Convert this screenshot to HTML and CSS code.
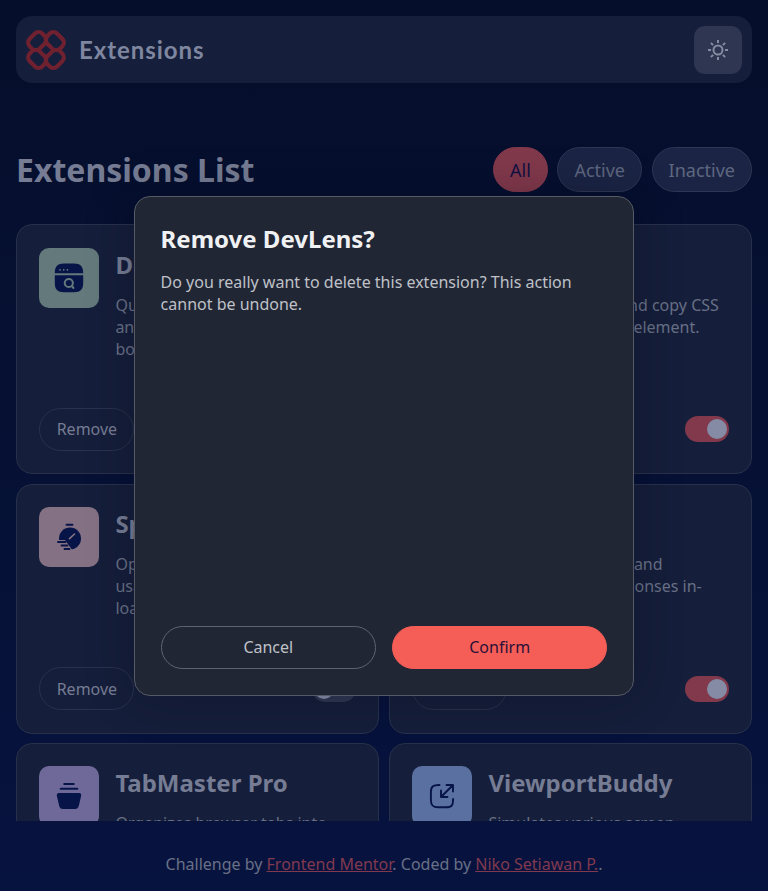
FILE: index.html
```html
<!DOCTYPE html>
<html lang="en">
<head>
<meta charset="utf-8">
<title>Extensions</title>
<link rel="stylesheet" href="styles.css">
</head>
<body>
<div class="page">
  <header class="topbar">
    <div class="brand">
      <svg class="brand-mark" viewBox="0 0 40 40" fill="none" stroke="currentColor" stroke-width="4.2">
        <rect x="2.200" y="4.200" width="18" height="14" rx="5.500" transform="rotate(-45 11.200 11.200)"/>
        <rect x="19.800" y="4.200" width="18" height="14" rx="5.500" transform="rotate(45 28.800 11.200)"/>
        <rect x="2.200" y="21.800" width="18" height="14" rx="5.500" transform="rotate(45 11.200 28.800)"/>
        <rect x="19.800" y="21.800" width="18" height="14" rx="5.500" transform="rotate(-45 28.800 28.800)"/>
      </svg>
      <span class="brand-name">Extensions</span>
    </div>
    <button class="theme" aria-label="Toggle theme">
      <svg width="22" height="22" viewBox="0 0 22 22" fill="none" stroke="currentColor" stroke-width="2">
        <circle cx="11" cy="11" r="4.500"/>
        <path d="M11 1v3M11 18v3M1 11h3M18 11h3M3.900 3.900l2.200 2.200M15.900 15.900l2.200 2.200M3.900 18.100l2.200-2.200M15.900 6.100l2.200-2.200"/>
      </svg>
    </button>
  </header>

  <div class="heading">
    <h1>Extensions List</h1>
    <nav class="filters">
      <button class="filter filter-on">All</button>
      <button class="filter">Active</button>
      <button class="filter">Inactive</button>
    </nav>
  </div>

  <main class="list">
    <article class="card">
      <div class="info">
        <div class="tile green">
          <svg width="60" height="60" viewBox="0 0 60 60">
            <path fill="currentColor" d="M15.800 25.200C15.800 18.500 18.500 15.500 25 15.500H35C41.500 15.500 44.200 18.500 44.200 25.200ZM15.800 27.200H44.200V35C44.200 41.500 41.500 44.200 35 44.200H25C18.500 44.200 15.800 41.500 15.800 35Z"/>
            <g fill="#63797b"><circle cx="21" cy="21.800" r=".9"/><circle cx="24.700" cy="21.800" r=".9"/><circle cx="28.400" cy="21.800" r=".9"/></g>
            <g fill="none" stroke="#63797b" stroke-width="2" stroke-linecap="round"><circle cx="29.800" cy="35" r="4.100"/><path d="M32.800 38l1.700 2"/></g>
          </svg>
        </div>
        <div class="copy"><h2>DevLens</h2><p>Quickly inspect page layouts and visualize element boundaries.</p></div>
      </div>
      <div class="actions"><button class="remove">Remove</button><span class="switch on"></span></div>
    </article>

    <article class="card">
      <div class="info">
        <div class="tile blue"></div>
        <div class="copy"><h2>StyleSpy</h2><p>Instantly analyze and copy CSS from any webpage element.</p></div>
      </div>
      <div class="actions"><button class="remove">Remove</button><span class="switch on"></span></div>
    </article>

    <article class="card">
      <div class="info">
        <div class="tile pink">
          <svg width="60" height="60" viewBox="0 0 60 60" fill="none" stroke-linecap="round">
            <circle cx="31" cy="31.500" r="11" fill="currentColor"/>
            <path d="M16 33H26L34 44H18Z" fill="#857184"/>
            <path d="M30.500 31.700l5-4.700" stroke="#857184" stroke-width="1.600"/>
            <path d="M27.500 17.800h6M19 35h7.500M22.500 38.500h6M25.500 42h5" stroke="currentColor" stroke-width="1.900"/>
          </svg>
        </div>
        <div class="copy"><h2>SpeedBoost</h2><p>Optimizes browser resource usage to accelerate page loading.</p></div>
      </div>
      <div class="actions"><button class="remove">Remove</button><span class="switch"></span></div>
    </article>

    <article class="card">
      <div class="info">
        <div class="tile pink"></div>
        <div class="copy"><h2>JSONWizard</h2><p>Formats, validates, and prettifies JSON responses in-browser.</p></div>
      </div>
      <div class="actions"><button class="remove">Remove</button><span class="switch on"></span></div>
    </article>

    <article class="card">
      <div class="info">
        <div class="tile purple">
          <svg width="60" height="60" viewBox="0 0 60 60" fill="none" stroke-linecap="round">
            <path d="M25.200 18h9.600M21.700 22.800h16.700" stroke="currentColor" stroke-width="1.900"/>
            <path fill="currentColor" d="M20 27H40C41.700 27 42.500 28.200 42.100 30L39.900 39.500C39.300 42 38.200 42.900 36 42.900H24C21.800 42.900 20.700 42 20.100 39.500L17.900 30C17.500 28.200 18.300 27 20 27Z"/>
          </svg>
        </div>
        <div class="copy"><h2>TabMaster Pro</h2><p>Organizes browser tabs into groups and sessions.</p></div>
      </div>
      <div class="actions"><button class="remove">Remove</button><span class="switch on"></span></div>
    </article>

    <article class="card">
      <div class="info">
        <div class="tile blue">
          <svg width="60" height="60" viewBox="0 0 60 60" fill="none" stroke="currentColor" stroke-width="1.900" stroke-linecap="round" stroke-linejoin="round">
            <path d="M27.500 19C21.500 18.800 18.900 20.500 18.900 26V34C18.900 39.500 20.800 41.300 26 41.300H34C39.600 41.300 41.200 39.300 41.100 33"/>
            <path d="M40.500 19.500L29.500 30.500M34.500 19H41V25.500M29 24.500V31H35.500"/>
          </svg>
        </div>
        <div class="copy"><h2>ViewportBuddy</h2><p>Simulates various screen resolutions directly within the browser.</p></div>
      </div>
      <div class="actions"><button class="remove">Remove</button><span class="switch"></span></div>
    </article>
  </main>

  <footer>Challenge by <a>Frontend Mentor</a>. Coded by <a>Niko Setiawan P.</a>.</footer>
</div>

<div class="modal" role="dialog">
  <h3>Remove DevLens?</h3>
  <p>Do you really want to delete this extension? This action cannot be undone.</p>
  <div class="choices">
    <button class="choice">Cancel</button>
    <button class="choice confirm">Confirm</button>
  </div>
</div>
</body>
</html>
```
FILE: styles.css
```css
* { box-sizing: border-box; }

body {
  margin: 0;
  height: 891px;
  overflow: hidden;
  font: 16px/22px "Noto Sans", sans-serif;
  color: #687086;
  background: linear-gradient(180deg, #050e2a, #07133f);
}

h1, h2, h3, p { margin: 0; }

button {
  font: inherit;
  color: inherit;
  background: none;
  border: 0;
  padding: 0;
}

.page {
  display: flex;
  flex-direction: column;
  height: 891px;
  padding: 16px 16px 0;
}

.topbar {
  display: flex;
  flex: none;
  align-items: center;
  justify-content: space-between;
  height: 67px;
  padding: 0 10px;
  border-radius: 16px;
  background: #151e3b;
}

.brand { display: flex; align-items: center; gap: 13px; }
.brand-mark { width: 40px; height: 40px; color: #6f2130; }
.brand-name {
  font: 700 24px/34px Lato, sans-serif;
  letter-spacing: 0.95px;
  color: #7f869f;
}

.theme {
  display: grid;
  place-items: center;
  width: 48px;
  height: 48px;
  border-radius: 11px;
  color: #858ba1;
  background: #2e3651;
}

.heading {
  display: flex;
  flex: none;
  align-items: center;
  justify-content: space-between;
  height: 45px;
  margin: 64px 0 32.3px;
}

h1 { font-size: 32px; line-height: 45px; font-weight: 700; color: #757c93; }

.filters { display: flex; gap: 9.6px; }
.filter {
  height: 45px;
  padding: 0 16px;
  font-size: 18px;
  border: 1px solid #2d3652;
  border-radius: 23px;
  background: #1b2444;
  color: #5e6780;
}
.filter-on { border-color: #81394b; background: #81394b; color: #151044; }

.list {
  display: grid;
  flex: none;
  grid-template-columns: 1fr 1fr;
  grid-auto-rows: 250px;
  gap: 9.4px 10px;
  height: 596.7px;
  overflow: hidden;
}

.card {
  display: flex;
  flex-direction: column;
  justify-content: space-between;
  padding: 22.4px;
  border: 1px solid #283149;
  border-radius: 16px;
  background: #151e3a;
}

.info { display: flex; gap: 16px; }
.tile { flex: none; width: 60px; height: 60px; border-radius: 10px; color: #071448; }
.tile svg { display: block; }
.green { background: #63797b; }
.blue { background: #5a70a0; }
.pink { background: #857184; }
.purple { background: #6f699a; }

h2 { font-size: 24px; line-height: 34px; font-weight: 700; color: #757c93; }
.copy p { margin-top: 12px; }

.actions { display: flex; align-items: center; justify-content: space-between; }
.remove {
  width: 95px;
  height: 43px;
  border: 1px solid #29324b;
  border-radius: 22px;
  color: #757c93;
}

.switch {
  display: flex;
  width: 44px;
  height: 26px;
  padding: 3px 2px;
  border-radius: 13px;
  background: #2e3651;
}
.switch::before { content: ""; width: 20px; height: 20px; border-radius: 50%; background: #858ba5; }
.on { justify-content: flex-end; background: #81394b; }

footer { margin-top: 32px; text-align: center; }
footer a { color: #81394f; text-decoration: underline; }

.modal {
  position: absolute;
  left: 134px;
  top: 196px;
  display: flex;
  flex-direction: column;
  width: 500px;
  height: 500px;
  padding: 25px 25.6px 26px;
  border: 1px solid #555a66;
  border-radius: 16px;
  background: #212635;
  box-shadow: 0 0 48px rgba(0, 0, 20, .25);
  color: #bfc1c7;
}

h3 { font-size: 24px; line-height: 33px; font-weight: 700; color: #f0f1f3; }
.modal p { margin-top: 16px; }

.choices { display: grid; grid-template-columns: 1fr 1fr; gap: 16px; margin-top: auto; }
.choice { height: 43px; padding-bottom: 2px; border: 1px solid #60646f; border-radius: 22px; }
.confirm { border-color: #f55e57; background: #f55e57; color: #2b1038; }
```
